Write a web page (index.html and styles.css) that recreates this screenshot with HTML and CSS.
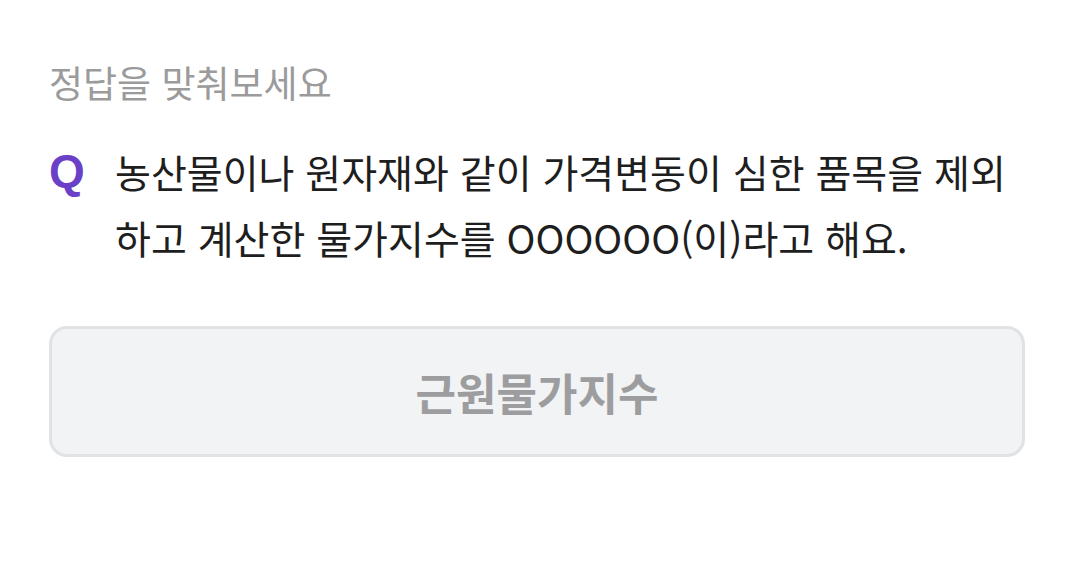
FILE: index.html
```html
<!DOCTYPE html>
<html lang="ko">
<head>
    <meta charset="UTF-8">
    <title>정답을 맞춰보세요</title>
    <link rel="stylesheet" href="styles.css">
</head>
<body>
    <div class="quiz">
        <h2 class="quiz-title">정답을 맞춰보세요</h2>
        <div class="question">
            <span class="q-mark">Q</span>
            <p class="q-text">농산물이나 원자재와 같이 가격변동이 심한 품목을 제외 하고 계산한 물가지수를 OOOOOO(이)라고 해요.</p>
        </div>
        <div class="answer">근원물가지수</div>
    </div>
</body>
</html>
```

FILE: styles.css
```css
body {
    margin: 0;
    background-color: #fff;
    font-family: "Noto Sans CJK KR", "Noto Sans", sans-serif;
}
.quiz {
    padding: 56px 51px 0 49px;
}
.quiz-title {
    margin: 0;
    font-size: 37px;
    font-weight: 400;
    line-height: 52px;
    color: #9b9b9b;
}
.question {
    display: flex;
    gap: 18px;
    margin-top: 30px;
}
.q-mark {
    flex: none;
    width: 48px;
    font-family: "Liberation Sans", Arial, sans-serif;
    font-size: 46px;
    font-weight: 700;
    line-height: 66px;
    color: #6a40c6;
}
.q-text {
    margin: 0;
    font-size: 39px;
    line-height: 66px;
    color: #1e1e1e;
    word-break: keep-all;
}
.answer {
    margin-top: 56px;
    height: 125px;
    border: 3px solid #e1e2e4;
    border-radius: 18px;
    background-color: #f2f3f5;
    display: flex;
    align-items: center;
    justify-content: center;
    font-size: 44px;
    font-weight: 700;
    color: #9d9da0;
}
```
